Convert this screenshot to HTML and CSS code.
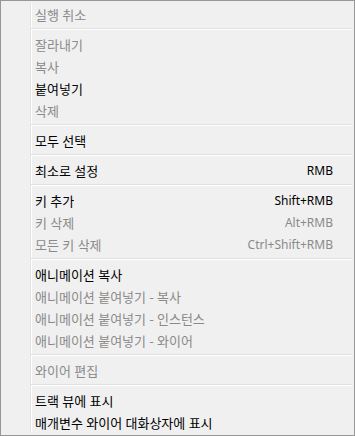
FILE: index.html
```html
<!DOCTYPE html>
<html lang="ko">
<head>
    <meta charset="UTF-8">
    <title>Context Menu</title>
    <link rel="stylesheet" href="styles.css">
</head>
<body>
    <div class="menu">
        <ul class="menu-list">
            <li class="item disabled"><span class="label">실행 취소</span></li>
            <li class="sep"></li>
            <li class="item disabled"><span class="label">잘라내기</span></li>
            <li class="item disabled"><span class="label">복사</span></li>
            <li class="item"><span class="label">붙여넣기</span></li>
            <li class="item disabled"><span class="label">삭제</span></li>
            <li class="sep"></li>
            <li class="item"><span class="label">모두 선택</span></li>
            <li class="sep"></li>
            <li class="item"><span class="label">최소로 설정</span><span class="key">RMB</span></li>
            <li class="sep"></li>
            <li class="item"><span class="label">키 추가</span><span class="key">Shift+RMB</span></li>
            <li class="item disabled"><span class="label">키 삭제</span><span class="key">Alt+RMB</span></li>
            <li class="item disabled"><span class="label">모든 키 삭제</span><span class="key">Ctrl+Shift+RMB</span></li>
            <li class="sep"></li>
            <li class="item"><span class="label">애니메이션 복사</span></li>
            <li class="item disabled"><span class="label">애니메이션 붙여넣기 - 복사</span></li>
            <li class="item disabled"><span class="label">애니메이션 붙여넣기 - 인스턴스</span></li>
            <li class="item disabled"><span class="label">애니메이션 붙여넣기 - 와이어</span></li>
            <li class="sep"></li>
            <li class="item disabled"><span class="label">와이어 편집</span></li>
            <li class="sep"></li>
            <li class="item"><span class="label">트랙 뷰에 표시</span></li>
            <li class="item"><span class="label">매개변수 와이어 대화상자에 표시</span></li>
        </ul>
    </div>
</body>
</html>
```

FILE: styles.css
```css
html, body {
    margin: 0;
    padding: 0;
    background-color: #f0f0f0;
}
.menu {
    box-sizing: border-box;
    width: 355px;
    height: 436px;
    border: 1px solid #979797;
    padding: 2px;
    background-color: #f0f0f0;
    font-family: "Noto Sans", "Noto Sans CJK KR", sans-serif;
    font-size: 12px;
    color: #000;
}
.menu-list {
    list-style: none;
    margin: 0;
    padding: 0;
    height: 100%;
    background: linear-gradient(to right, transparent 27px, #e2e3e3 27px, #e2e3e3 28px, #ffffff 28px, #ffffff 29px, transparent 29px);
}
.item {
    display: flex;
    align-items: center;
    justify-content: space-between;
    height: 22px;
    padding: 0 19px 0 32px;
}
.label {
    white-space: nowrap;
    font-size: 13px;
}
.key {
    white-space: nowrap;
}
.disabled {
    color: #8a8a8a;
}
.sep {
    height: 1px;
    margin: 3px 0 3px 28px;
    background-color: #e0e0e0;
    border-bottom: 1px solid #ffffff;
}
```
